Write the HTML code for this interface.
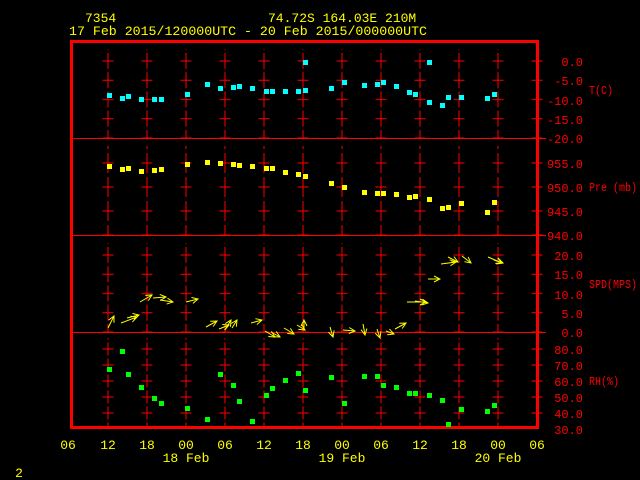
<!DOCTYPE html>
<html><head><meta charset="utf-8"><style>
html,body{margin:0;padding:0;background:#000;width:640px;height:480px;overflow:hidden}
svg{display:block}
text{font-family:"Liberation Mono",monospace;font-size:13px}
.y{fill:#ffff00}.r{fill:#ff0000}
.r text{font-size:12px}
</style></head><body>
<svg width="640" height="480" viewBox="0 0 640 480" xmlns="http://www.w3.org/2000/svg">
<defs>
<pattern id="pT" patternUnits="userSpaceOnUse" x="88.5" y="51.4" width="39" height="19.25">
<line x1="19.5" y1="1.5" x2="19.5" y2="17.5" stroke="#f00" stroke-width="1"/>
<line x1="14" y1="9.6" x2="25" y2="9.6" stroke="#f00" stroke-width="1"/>
</pattern>
<pattern id="pP" patternUnits="userSpaceOnUse" x="88.5" y="151" width="39" height="24">
<line x1="19.5" y1="2" x2="19.5" y2="22" stroke="#f00" stroke-width="1"/>
<line x1="14" y1="12" x2="25" y2="12" stroke="#f00" stroke-width="1"/>
</pattern>
<pattern id="pS" patternUnits="userSpaceOnUse" x="88.5" y="245.4" width="39" height="19.25">
<line x1="19.5" y1="1.5" x2="19.5" y2="17.5" stroke="#f00" stroke-width="1"/>
<line x1="14" y1="9.6" x2="25" y2="9.6" stroke="#f00" stroke-width="1"/>
</pattern>
<pattern id="pR" patternUnits="userSpaceOnUse" x="88.5" y="341" width="39" height="16">
<line x1="19.5" y1="1.5" x2="19.5" y2="14.5" stroke="#f00" stroke-width="1"/>
<line x1="14" y1="8" x2="25" y2="8" stroke="#f00" stroke-width="1"/>
</pattern>
<marker id="ah" markerWidth="8" markerHeight="8" refX="7" refY="4" orient="auto" markerUnits="userSpaceOnUse">
<path d="M1,1 L7,4 L1,7" fill="none" stroke="#ff0" stroke-width="1"/>
</marker>
</defs>
<rect x="88" y="49" width="458" height="89" fill="url(#pT)"/>
<rect x="88" y="146" width="458" height="89" fill="url(#pP)"/>
<rect x="88" y="243" width="458" height="89" fill="url(#pS)"/>
<rect x="88" y="338" width="458" height="88" fill="url(#pR)"/>
<line x1="71" y1="138.5" x2="546" y2="138.5" stroke="#f00"/>
<line x1="71" y1="235.5" x2="546" y2="235.5" stroke="#f00"/>
<line x1="71" y1="332.5" x2="546" y2="332.5" stroke="#f00"/>
<rect x="71.5" y="41.5" width="466" height="386" fill="none" stroke="#f00" stroke-width="3"/>
<g class="r" text-anchor="end">
<text x="583" y="66">0.0</text><text x="583" y="85">-5.0</text><text x="583" y="105">-10.0</text><text x="583" y="124">-15.0</text><text x="583" y="143">-20.0</text>
<text x="583" y="168">955.0</text><text x="583" y="192">950.0</text><text x="583" y="216">945.0</text><text x="583" y="240">940.0</text>
<text x="583" y="260">20.0</text><text x="583" y="279">15.0</text><text x="583" y="299">10.0</text><text x="583" y="318">5.0</text><text x="583" y="337">0.0</text>
<text x="583" y="354">80.0</text><text x="583" y="370">70.0</text><text x="583" y="386">60.0</text><text x="583" y="402">50.0</text><text x="583" y="418">40.0</text><text x="583" y="434">30.0</text>
</g>
<g class="r"><text x="589" y="94" textLength="24" lengthAdjust="spacingAndGlyphs">T(C)</text><text x="589" y="191" textLength="48" lengthAdjust="spacingAndGlyphs">Pre (mb)</text><text x="589" y="288" textLength="48" lengthAdjust="spacingAndGlyphs">SPD(MPS)</text><text x="589" y="385" textLength="30" lengthAdjust="spacingAndGlyphs">RH(%)</text></g>
<g class="y">
<text x="85" y="22">7354</text><text x="268" y="22">74.72S  164.03E   210M</text>
<text x="69" y="35" textLength="358" lengthAdjust="spacingAndGlyphs">17 Feb 2015/120000UTC - 20 Feb 2015/000000UTC</text>
</g>
<g class="y" text-anchor="middle">
<text x="68" y="449">06</text><text x="108" y="449">12</text><text x="147" y="449">18</text><text x="186" y="449">00</text><text x="225" y="449">06</text><text x="264" y="449">12</text><text x="303" y="449">18</text><text x="342" y="449">00</text><text x="381" y="449">06</text><text x="420" y="449">12</text><text x="459" y="449">18</text><text x="498" y="449">00</text><text x="537" y="449">06</text>
<text x="186" y="462">18 Feb</text><text x="342" y="462">19 Feb</text><text x="498" y="462">20 Feb</text>
<text x="19" y="477">2</text>
</g>
<g fill="#00ffff">
<rect x="107" y="93" width="5" height="5"/><rect x="120" y="96" width="5" height="5"/><rect x="126" y="94" width="5" height="5"/><rect x="139" y="97" width="5" height="5"/><rect x="152" y="97" width="5" height="5"/><rect x="159" y="97" width="5" height="5"/><rect x="185" y="92" width="5" height="5"/><rect x="205" y="82" width="5" height="5"/><rect x="218" y="86" width="5" height="5"/><rect x="231" y="85" width="5" height="5"/><rect x="237" y="84" width="5" height="5"/><rect x="250" y="86" width="5" height="5"/><rect x="264" y="89" width="5" height="5"/><rect x="270" y="89" width="5" height="5"/><rect x="283" y="89" width="5" height="5"/><rect x="296" y="89" width="5" height="5"/><rect x="303" y="88" width="5" height="5"/><rect x="303" y="60" width="5" height="5"/><rect x="329" y="86" width="5" height="5"/><rect x="342" y="80" width="5" height="5"/><rect x="362" y="83" width="5" height="5"/><rect x="375" y="82" width="5" height="5"/><rect x="381" y="80" width="5" height="5"/><rect x="394" y="84" width="5" height="5"/><rect x="407" y="90" width="5" height="5"/><rect x="413" y="92" width="5" height="5"/><rect x="427" y="60" width="5" height="5"/><rect x="427" y="100" width="5" height="5"/><rect x="440" y="103" width="5" height="5"/><rect x="446" y="95" width="5" height="5"/><rect x="459" y="95" width="5" height="5"/><rect x="485" y="96" width="5" height="5"/><rect x="492" y="92" width="5" height="5"/>
</g>
<g fill="#ffff00">
<rect x="107" y="164" width="5" height="5"/><rect x="120" y="167" width="5" height="5"/><rect x="126" y="166" width="5" height="5"/><rect x="139" y="169" width="5" height="5"/><rect x="152" y="168" width="5" height="5"/><rect x="159" y="167" width="5" height="5"/><rect x="185" y="162" width="5" height="5"/><rect x="205" y="160" width="5" height="5"/><rect x="218" y="161" width="5" height="5"/><rect x="231" y="162" width="5" height="5"/><rect x="237" y="163" width="5" height="5"/><rect x="250" y="164" width="5" height="5"/><rect x="264" y="166" width="5" height="5"/><rect x="270" y="166" width="5" height="5"/><rect x="283" y="170" width="5" height="5"/><rect x="296" y="172" width="5" height="5"/><rect x="303" y="174" width="5" height="5"/><rect x="329" y="181" width="5" height="5"/><rect x="342" y="185" width="5" height="5"/><rect x="362" y="190" width="5" height="5"/><rect x="375" y="191" width="5" height="5"/><rect x="381" y="191" width="5" height="5"/><rect x="394" y="192" width="5" height="5"/><rect x="407" y="195" width="5" height="5"/><rect x="413" y="194" width="5" height="5"/><rect x="427" y="197" width="5" height="5"/><rect x="440" y="206" width="5" height="5"/><rect x="446" y="205" width="5" height="5"/><rect x="459" y="201" width="5" height="5"/><rect x="485" y="210" width="5" height="5"/><rect x="492" y="200" width="5" height="5"/>
</g>
<g fill="#00ff00">
<rect x="107" y="367" width="5" height="5"/><rect x="120" y="349" width="5" height="5"/><rect x="126" y="372" width="5" height="5"/><rect x="139" y="385" width="5" height="5"/><rect x="152" y="396" width="5" height="5"/><rect x="159" y="401" width="5" height="5"/><rect x="185" y="406" width="5" height="5"/><rect x="205" y="417" width="5" height="5"/><rect x="218" y="372" width="5" height="5"/><rect x="231" y="383" width="5" height="5"/><rect x="237" y="399" width="5" height="5"/><rect x="250" y="419" width="5" height="5"/><rect x="264" y="393" width="5" height="5"/><rect x="270" y="386" width="5" height="5"/><rect x="283" y="378" width="5" height="5"/><rect x="296" y="371" width="5" height="5"/><rect x="303" y="388" width="5" height="5"/><rect x="329" y="375" width="5" height="5"/><rect x="342" y="401" width="5" height="5"/><rect x="362" y="374" width="5" height="5"/><rect x="375" y="374" width="5" height="5"/><rect x="381" y="383" width="5" height="5"/><rect x="394" y="385" width="5" height="5"/><rect x="407" y="391" width="5" height="5"/><rect x="413" y="391" width="5" height="5"/><rect x="427" y="393" width="5" height="5"/><rect x="440" y="398" width="5" height="5"/><rect x="446" y="422" width="5" height="5"/><rect x="459" y="407" width="5" height="5"/><rect x="485" y="409" width="5" height="5"/><rect x="492" y="403" width="5" height="5"/>
</g>
<g stroke="#ffff00" stroke-width="1" fill="none" marker-end="url(#ah)">
<line x1="108" y1="328" x2="114" y2="316"/>
<line x1="121" y1="323" x2="137" y2="317"/>
<line x1="127" y1="318" x2="139" y2="315"/>
<line x1="140" y1="302" x2="152" y2="295"/>
<line x1="153" y1="298" x2="166" y2="297"/>
<line x1="160" y1="300" x2="173" y2="302"/>
<line x1="186" y1="302" x2="198" y2="299"/>
<line x1="206" y1="327" x2="217" y2="321"/>
<line x1="219" y1="329" x2="229" y2="325"/>
<line x1="225" y1="330" x2="231" y2="320"/>
<line x1="232" y1="328" x2="237" y2="320"/>
<line x1="251" y1="323" x2="262" y2="320"/>
<line x1="265" y1="331" x2="275" y2="337"/>
<line x1="271" y1="332" x2="280" y2="337"/>
<line x1="284" y1="328" x2="294" y2="334"/>
<line x1="297" y1="325" x2="305" y2="330"/>
<line x1="304" y1="330" x2="304" y2="320"/>
<line x1="330" y1="327" x2="333" y2="337"/>
<line x1="343" y1="330" x2="355" y2="331"/>
<line x1="363" y1="324" x2="365" y2="335"/>
<line x1="377" y1="329" x2="380" y2="338"/>
<line x1="386" y1="331" x2="394" y2="334"/>
<line x1="395" y1="329" x2="406" y2="323"/>
<line x1="407" y1="302" x2="426" y2="302"/>
<line x1="415" y1="301" x2="428" y2="303"/>
<line x1="428" y1="279" x2="440" y2="279"/>
<line x1="441" y1="264" x2="456" y2="262"/>
<line x1="448" y1="257" x2="458" y2="262"/>
<line x1="462" y1="256" x2="471" y2="263"/>
<line x1="488" y1="257" x2="502" y2="263"/>
<line x1="494" y1="260" x2="503" y2="263"/>
</g>
</svg>
</body></html>
